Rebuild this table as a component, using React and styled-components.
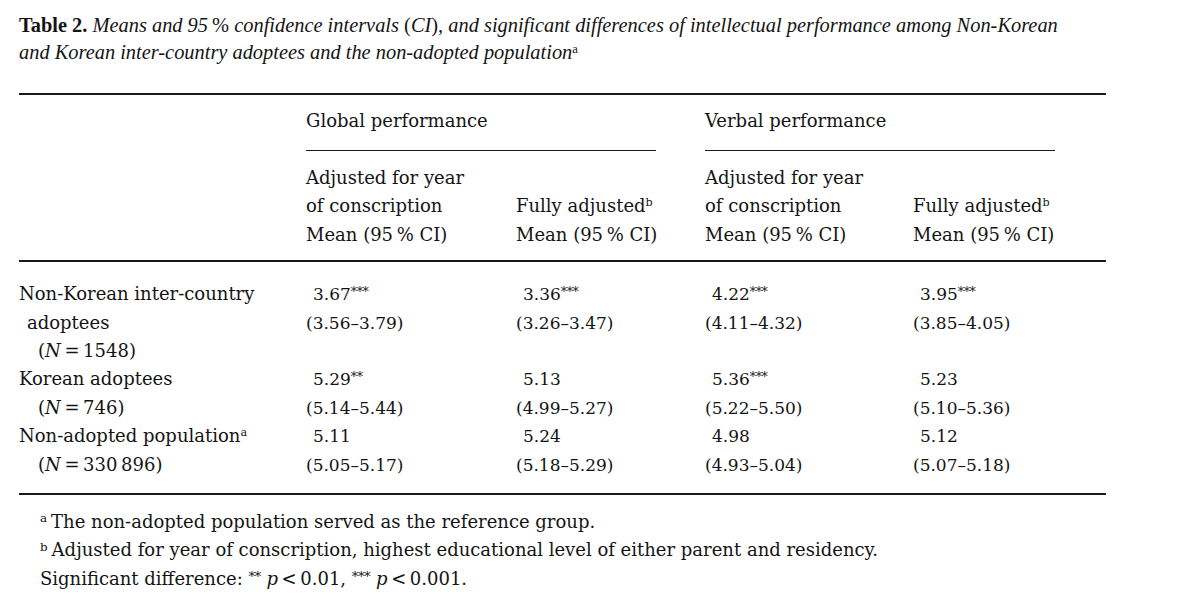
import React from "react";
import styled, { createGlobalStyle } from "styled-components";

const GlobalStyle = createGlobalStyle`
  html, body { margin: 0; padding: 0; background: #ffffff; }
  body { color: #141414; font-family: "DejaVu Serif", "Liberation Serif", serif; }
`;

const COLS = "287px 210px 189px 208px 193px";
const LINE = "28.4px";

const Page = styled.div`
  width: 1200px;
  height: 600px;
  box-sizing: border-box;
  padding: 12px 0 0 19px;
  overflow: hidden;
`;

const Caption = styled.div`
  font-family: "Liberation Serif", serif;
  font-size: 20.4px;
  line-height: 27px;
  font-style: italic;
  white-space: nowrap;
`;

const CaptionLabel = styled.b`
  font-style: normal;
  font-weight: 700;
`;

const Plain = styled.span`
  font-style: normal;
`;

const Table = styled.div`
  width: 1087px;
  margin-top: 27px;
  border-top: 2px solid #1a1a1a;
  font-size: 18px;
  line-height: ${LINE};
`;

const Grid = styled.div`
  display: grid;
  grid-template-columns: ${COLS};
  padding-top: ${(p) => p.$top}px;
  padding-bottom: ${(p) => p.$bottom}px;
  border-bottom: ${(p) => (p.$rule ? "2px solid #1a1a1a" : "none")};
`;

const GroupCell = styled.div`
  grid-column: span 2;
  width: 350px;
  padding-bottom: 14.6px;
  border-bottom: 1px solid #1a1a1a;
`;

const HeadCell = styled.div`
  align-self: end;
  white-space: nowrap;
`;

const LabelCell = styled.div`
  white-space: nowrap;
`;

const Line = styled.div`
  padding-left: ${(p) => p.$indent || 0}px;
`;

const ValueCell = styled.div`
  font-size: 17px;
  white-space: nowrap;
`;

const Sup = styled.sup`
  font-style: normal;
  font-size: 0.62em;
  line-height: 0;
  vertical-align: 0.5em;
`;

const Stars = styled.span`
  font-size: 0.74em;
  vertical-align: 0.3em;
  line-height: 0;
  letter-spacing: -0.5px;
`;

const Footnotes = styled.div`
  padding: 13px 0 0 21px;
  font-size: 18px;
  line-height: ${LINE};
  white-space: nowrap;
`;

const FootSup = styled.sup`
  font-size: 0.66em;
  line-height: 0;
  vertical-align: 0.5em;
  margin-right: 4px;
`;

const NLabel = ({ n }) => (
  <>
    (<i>N</i>&thinsp;=&thinsp;{n})
  </>
);

const rows = [
  {
    label: [
      { text: "Non-Korean inter-country", indent: 0 },
      { text: "adoptees", indent: 8 },
      { text: <NLabel n="1548" />, indent: 19 },
    ],
    values: [
      ["3.67", "***", "(3.56–3.79)"],
      ["3.36", "***", "(3.26–3.47)"],
      ["4.22", "***", "(4.11–4.32)"],
      ["3.95", "***", "(3.85–4.05)"],
    ],
  },
  {
    label: [
      { text: "Korean adoptees", indent: 0 },
      { text: <NLabel n="746" />, indent: 19 },
    ],
    values: [
      ["5.29", "**", "(5.14–5.44)"],
      ["5.13", "", "(4.99–5.27)"],
      ["5.36", "***", "(5.22–5.50)"],
      ["5.23", "", "(5.10–5.36)"],
    ],
  },
  {
    label: [
      {
        text: (
          <>
            Non-adopted population<Sup>a</Sup>
          </>
        ),
        indent: 0,
      },
      { text: <NLabel n={"330\u2009896"} />, indent: 19 },
    ],
    values: [
      ["5.11", "", "(5.05–5.17)"],
      ["5.24", "", "(5.18–5.29)"],
      ["4.98", "", "(4.93–5.04)"],
      ["5.12", "", "(5.07–5.18)"],
    ],
  },
];

const headTwoLine = (
  <>
    <Line>Adjusted for year</Line>
    <Line>of conscription</Line>
    <Line>Mean (95&thinsp;% CI)</Line>
  </>
);

const headFully = (
  <>
    <Line>
      Fully adjusted<Sup>b</Sup>
    </Line>
    <Line>Mean (95&thinsp;% CI)</Line>
  </>
);

export default function App() {
  return (
    <>
      <GlobalStyle />
      <Page>
        <Caption>
          <CaptionLabel>Table 2.</CaptionLabel> Means and 95&thinsp;<Plain>%</Plain> confidence intervals{" "}
          <Plain>(</Plain>CI<Plain>)</Plain>, and significant differences of intellectual performance among Non-Korean
          <br />
          and Korean inter-country adoptees and the non-adopted population<Sup>a</Sup>
        </Caption>

        <Table>
          <Grid $top={12} $bottom={0}>
            <div />
            <GroupCell>Global performance</GroupCell>
            <GroupCell>Verbal performance</GroupCell>
          </Grid>

          <Grid $top={13} $bottom={11} $rule>
            <div />
            <HeadCell>{headTwoLine}</HeadCell>
            <HeadCell>{headFully}</HeadCell>
            <HeadCell>{headTwoLine}</HeadCell>
            <HeadCell>{headFully}</HeadCell>
          </Grid>

          <Grid $top={18} $bottom={14} $rule>
            {rows.map((row, i) => (
              <React.Fragment key={i}>
                <LabelCell>
                  {row.label.map((l, j) => (
                    <Line key={j} $indent={l.indent}>
                      {l.text}
                    </Line>
                  ))}
                </LabelCell>
                {row.values.map(([mean, stars, ci], k) => (
                  <ValueCell key={k}>
                    <Line $indent={7}>
                      {mean}
                      {stars && <Stars>{stars}</Stars>}
                    </Line>
                    <Line>{ci}</Line>
                  </ValueCell>
                ))}
              </React.Fragment>
            ))}
          </Grid>
        </Table>

        <Footnotes>
          <div>
            <FootSup>a</FootSup>The non-adopted population served as the reference group.
          </div>
          <div>
            <FootSup>b</FootSup>Adjusted for year of conscription, highest educational level of either parent and residency.
          </div>
          <div>
            Significant difference: <Stars>**</Stars> <i>p</i>&thinsp;&lt;&thinsp;0.01, <Stars>***</Stars>{" "}
            <i>p</i>&thinsp;&lt;&thinsp;0.001.
          </div>
        </Footnotes>
      </Page>
    </>
  );
}
